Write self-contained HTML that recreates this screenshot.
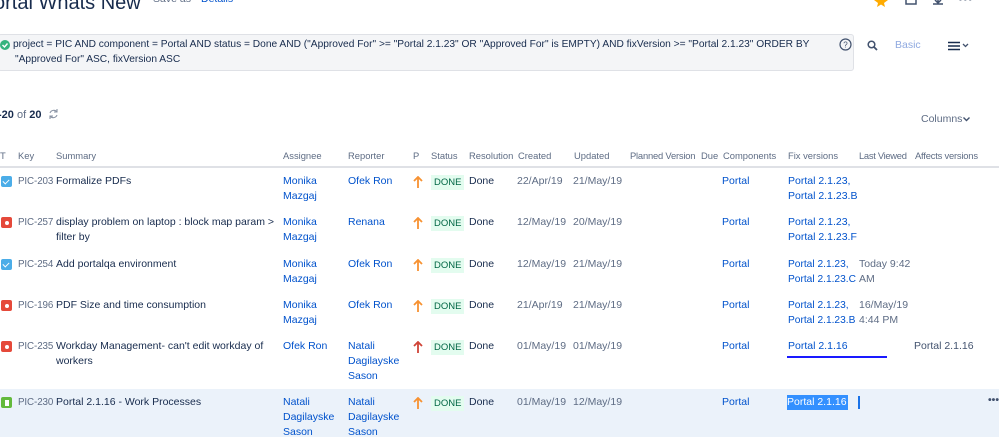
<!DOCTYPE html>
<html><head><meta charset="utf-8"><style>
*{margin:0;padding:0;box-sizing:border-box}
body{width:999px;height:437px;overflow:hidden;background:#fff;font-family:"Liberation Sans",sans-serif;font-size:10.5px;color:#172b4d;position:relative}
.a{position:absolute;white-space:nowrap;line-height:15px}
.l{color:#0052cc}
.g{color:#5e6c84}
.k{color:#5e6c84;font-size:9.8px;letter-spacing:-0.1px}
.h{color:#5e6c84;font-size:9.4px}
.done{position:absolute;background:#e3fcef;color:#006644;font-size:9.5px;padding:0 3px;line-height:15px}
.ic{position:absolute;width:11px;height:11px;border-radius:2px}
.bug{background:#e5493a}.bug::after{content:"";position:absolute;left:3.5px;top:3.5px;width:4px;height:4px;border-radius:50%;background:#fff}
.task{background:#4bade8}
.task::after{content:"";position:absolute;left:3px;top:2px;width:3px;height:5px;border:solid #fff;border-width:0 1.6px 1.6px 0;transform:rotate(45deg)}
.story{background:#63ba3c}
.story::after{content:"";position:absolute;left:3.5px;top:2.5px;width:4px;height:6px;background:#fff}
.ar{position:absolute;width:10px;height:12px}
</style></head><body>
<div class="a" style="left:-6px;top:-9px;font-size:20px;line-height:24px;color:#172b4d">ortal Whats New</div>
<div class="a g" style="left:153px;top:-8px">Save as</div>
<div class="a l" style="left:201px;top:-8px">Details</div>
<svg style="position:absolute;left:874px;top:-5px" width="14" height="12"><polygon points="7,0 9,5 14,5 10,8 11,12 7,9.5 3,12 4,8 0,5 5,5" fill="#ffab00"/></svg>
<svg style="position:absolute;left:905px;top:-4px" width="12" height="10"><rect x="1" y="1" width="10" height="7" fill="none" stroke="#42526e" stroke-width="1.5"/></svg>
<svg style="position:absolute;left:932px;top:-4px" width="12" height="10"><path d="M6 0v7M3 4l3 3 3-3M1 8h10" fill="none" stroke="#42526e" stroke-width="1.5"/></svg>
<div class="a" style="left:958px;top:-9px;font-size:14px;font-weight:bold;color:#42526e">•••</div>

<div style="position:absolute;left:-2px;top:34px;width:856px;height:37px;background:#f4f5f7;border:1px solid #dfe1e6;border-radius:3px"></div>
<svg style="position:absolute;left:0;top:40px" width="10" height="10"><circle cx="5" cy="5" r="5" fill="#36b37e"/><path d="M2.5 5l2 2 3-3.5" fill="none" stroke="#fff" stroke-width="1.4"/></svg>
<div class="a" style="left:13px;top:37px;font-size:10.2px">project = PIC AND component = Portal AND status = Done AND ("Approved For" &gt;= "Portal 2.1.23" OR "Approved For" is EMPTY) AND fixVersion &gt;= "Portal 2.1.23" ORDER BY</div>
<div class="a" style="left:15px;top:52px;font-size:10.2px">"Approved For" ASC, fixVersion ASC</div>
<svg style="position:absolute;left:839px;top:38px" width="13" height="13"><circle cx="6.5" cy="6.5" r="5.5" fill="none" stroke="#42526e" stroke-width="1.2"/><text x="6.5" y="9.5" font-size="8" text-anchor="middle" fill="#42526e" font-family="Liberation Sans">?</text></svg>
<svg style="position:absolute;left:867px;top:40px" width="11" height="11"><circle cx="4.5" cy="4.5" r="3.3" fill="none" stroke="#42526e" stroke-width="1.5"/><path d="M7 7l3 3" stroke="#42526e" stroke-width="1.8"/></svg>
<div class="a" style="left:895px;top:38px;color:#8fa9e0">Basic</div>
<svg style="position:absolute;left:948px;top:41px" width="24" height="10"><path d="M0 1.5h12M0 5h12M0 8.5h12" stroke="#172b4d" stroke-width="1.6"/><path d="M15 3l2.5 2.5L20 3" fill="none" stroke="#42526e" stroke-width="1.3"/></svg>

<div class="a" style="left:-2px;top:108px;font-size:11px"><b>-20</b> <span class="g">of</span> <b>20</b></div>
<svg style="position:absolute;left:48px;top:109px" width="11" height="10"><path d="M2 4a4 4 0 0 1 7-1M9 6a4 4 0 0 1-7 1M9 0v3H6M2 10V7h3" fill="none" stroke="#8993a4" stroke-width="1.1"/></svg>
<div class="a g" style="left:921px;top:112px">Columns</div>
<svg style="position:absolute;left:963px;top:117px" width="7" height="5"><path d="M0.5 0.5l3 3 3-3" fill="none" stroke="#42526e" stroke-width="1.4"/></svg>

<div class="a h" style="left:0;top:148px">T</div>
<div class="a h" style="left:18px;top:148px">Key</div>
<div class="a h" style="left:56px;top:148px">Summary</div>
<div class="a h" style="left:283px;top:148px">Assignee</div>
<div class="a h" style="left:348px;top:148px">Reporter</div>
<div class="a h" style="left:413px;top:148px">P</div>
<div class="a h" style="left:431px;top:148px">Status</div>
<div class="a h" style="left:469px;top:148px">Resolution</div>
<div class="a h" style="left:518px;top:148px">Created</div>
<div class="a h" style="left:574px;top:148px">Updated</div>
<div class="a h" style="left:630px;top:148px;letter-spacing:-0.2px">Planned Version</div>
<div class="a h" style="left:701px;top:148px">Due</div>
<div class="a h" style="left:723px;top:148px">Components</div>
<div class="a h" style="left:788px;top:148px">Fix versions</div>
<div class="a h" style="left:859px;top:148px;letter-spacing:-0.3px">Last Viewed</div>
<div class="a h" style="left:915px;top:148px;letter-spacing:-0.2px">Affects versions</div>
<div style="position:absolute;left:0;top:166px;width:999px;height:2px;background:#dfe1e6"></div>

<div style="position:absolute;left:0;top:389px;width:999px;height:48px;background:#ebf2fa"></div>

<svg width="0" height="0" style="position:absolute"><defs><g id="up"><path d="M5 1v11M1 5l4-4 4 4" fill="none" stroke-width="1.8"/></g></defs></svg>

<!-- row1 -->
<div class="ic task" style="left:1px;top:176px"></div>
<div class="a k" style="left:18px;top:174px">PIC-203</div>
<div class="a" style="left:56px;top:174px">Formalize PDFs</div>
<div class="a l" style="left:283px;top:174px">Monika<br>Mazgaj</div>
<div class="a l" style="left:348px;top:174px">Ofek Ron</div>
<svg class="ar" style="left:413px;top:176px"><use href="#up" stroke="#f79232"/></svg>
<div class="done" style="left:431px;top:175px">DONE</div>
<div class="a" style="left:469px;top:174px">Done</div>
<div class="a g" style="left:517px;top:174px">22/Apr/19</div>
<div class="a g" style="left:573px;top:174px">21/May/19</div>
<div class="a l" style="left:722px;top:174px">Portal</div>
<div class="a l" style="left:788px;top:174px">Portal 2.1.23,<br>Portal 2.1.23.B</div>
<!-- row2 -->
<div class="ic bug" style="left:1px;top:217px"></div>
<div class="a k" style="left:18px;top:215px">PIC-257</div>
<div class="a" style="left:56px;top:215px">display problem on laptop : block map param &gt;<br>filter by</div>
<div class="a l" style="left:283px;top:215px">Monika<br>Mazgaj</div>
<div class="a l" style="left:348px;top:215px">Renana</div>
<svg class="ar" style="left:413px;top:217px"><use href="#up" stroke="#f79232"/></svg>
<div class="done" style="left:431px;top:216px">DONE</div>
<div class="a" style="left:469px;top:215px">Done</div>
<div class="a g" style="left:517px;top:215px">12/May/19</div>
<div class="a g" style="left:573px;top:215px">20/May/19</div>
<div class="a l" style="left:722px;top:215px">Portal</div>
<div class="a l" style="left:788px;top:215px">Portal 2.1.23,<br>Portal 2.1.23.F</div>
<!-- row3 -->
<div class="ic task" style="left:1px;top:259px"></div>
<div class="a k" style="left:18px;top:257px">PIC-254</div>
<div class="a" style="left:56px;top:257px">Add portalqa environment</div>
<div class="a l" style="left:283px;top:257px">Monika<br>Mazgaj</div>
<div class="a l" style="left:348px;top:257px">Ofek Ron</div>
<svg class="ar" style="left:413px;top:259px"><use href="#up" stroke="#f79232"/></svg>
<div class="done" style="left:431px;top:258px">DONE</div>
<div class="a" style="left:469px;top:257px">Done</div>
<div class="a g" style="left:517px;top:257px">12/May/19</div>
<div class="a g" style="left:573px;top:257px">21/May/19</div>
<div class="a l" style="left:722px;top:257px">Portal</div>
<div class="a l" style="left:788px;top:257px;font-size:10.2px">Portal 2.1.23,<br>Portal 2.1.23.C</div>
<div class="a g" style="left:859px;top:257px">Today 9:42<br>AM</div>
<!-- row4 -->
<div class="ic bug" style="left:1px;top:300px"></div>
<div class="a k" style="left:18px;top:298px">PIC-196</div>
<div class="a" style="left:56px;top:298px">PDF Size and time consumption</div>
<div class="a l" style="left:283px;top:298px">Monika<br>Mazgaj</div>
<div class="a l" style="left:348px;top:298px">Ofek Ron</div>
<svg class="ar" style="left:413px;top:300px"><use href="#up" stroke="#f79232"/></svg>
<div class="done" style="left:431px;top:299px">DONE</div>
<div class="a" style="left:469px;top:298px">Done</div>
<div class="a g" style="left:517px;top:298px">21/Apr/19</div>
<div class="a g" style="left:573px;top:298px">21/May/19</div>
<div class="a l" style="left:722px;top:298px">Portal</div>
<div class="a l" style="left:788px;top:298px;font-size:10.2px">Portal 2.1.23,<br>Portal 2.1.23.B</div>
<div class="a g" style="left:859px;top:298px">16/May/19<br>4:44 PM</div>
<!-- row5 -->
<div class="ic bug" style="left:1px;top:341px"></div>
<div class="a k" style="left:18px;top:339px">PIC-235</div>
<div class="a" style="left:56px;top:339px">Workday Management- can't edit workday of<br>workers</div>
<div class="a l" style="left:283px;top:339px">Ofek Ron</div>
<div class="a l" style="left:348px;top:339px">Natali<br>Dagilayske<br>Sason</div>
<svg class="ar" style="left:413px;top:341px"><use href="#up" stroke="#d04437"/></svg>
<div class="done" style="left:431px;top:340px">DONE</div>
<div class="a" style="left:469px;top:339px">Done</div>
<div class="a g" style="left:517px;top:339px">01/May/19</div>
<div class="a g" style="left:573px;top:339px">01/May/19</div>
<div class="a l" style="left:722px;top:339px">Portal</div>
<div class="a l" style="left:788px;top:339px">Portal 2.1.16</div>
<div style="position:absolute;left:787px;top:356px;width:100px;height:2px;background:#1a1aff"></div>
<div class="a" style="left:914px;top:339px;color:#42526e">Portal 2.1.16</div>
<!-- row6 -->
<div class="ic story" style="left:1px;top:397px"></div>
<div class="a k" style="left:18px;top:395px">PIC-230</div>
<div class="a" style="left:56px;top:395px">Portal 2.1.16 - Work Processes</div>
<div class="a l" style="left:283px;top:395px">Natali<br>Dagilayske<br>Sason</div>
<div class="a l" style="left:348px;top:395px">Natali<br>Dagilayske<br>Sason</div>
<svg class="ar" style="left:413px;top:397px"><use href="#up" stroke="#f79232"/></svg>
<div class="done" style="left:431px;top:396px">DONE</div>
<div class="a" style="left:469px;top:395px">Done</div>
<div class="a g" style="left:517px;top:395px">01/May/19</div>
<div class="a g" style="left:573px;top:395px">12/May/19</div>
<div class="a l" style="left:722px;top:395px">Portal</div>
<div class="a" style="left:787px;top:395px;background:#3390ff;color:#fff;padding-right:1px">Portal 2.1.16</div>
<div style="position:absolute;left:858px;top:396px;width:2px;height:13px;background:#1a73e8"></div>
<div class="a" style="left:988px;top:393px;font-weight:bold;color:#42526e">•••</div>
</body></html>
